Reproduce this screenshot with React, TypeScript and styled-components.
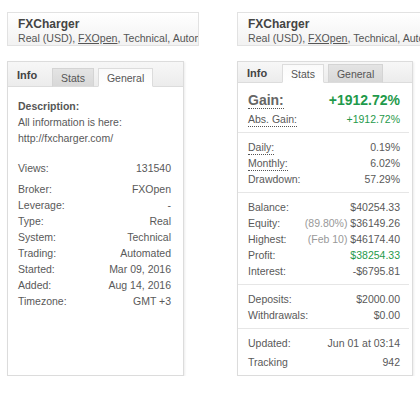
import { FC } from "react"
import styled, { createGlobalStyle } from "styled-components"

const GlobalStyle = createGlobalStyle`
  html, body {
    margin: 0;
    padding: 0;
    background: #fff;
    overflow: hidden;
  }
  body {
    font-family: "Liberation Sans", Arial, sans-serif;
    font-size: 10.5px;
    color: #595959;
  }
`

type Row = {
  label: string
  value: string
  note?: string
  green?: boolean
  dotted?: boolean
}

const generalRows: Row[] = [
  { label: "Broker:", value: "FXOpen" },
  { label: "Leverage:", value: "-" },
  { label: "Type:", value: "Real" },
  { label: "System:", value: "Technical" },
  { label: "Trading:", value: "Automated" },
  { label: "Started:", value: "Mar 09, 2016" },
  { label: "Added:", value: "Aug 14, 2016" },
  { label: "Timezone:", value: "GMT +3" },
]

const statGroups: Row[][] = [
  [
    { label: "Daily:", value: "0.19%", dotted: true },
    { label: "Monthly:", value: "6.02%", dotted: true },
    { label: "Drawdown:", value: "57.29%" },
  ],
  [
    { label: "Balance:", value: "$40254.33" },
    { label: "Equity:", value: "$36149.26", note: "(89.80%)" },
    { label: "Highest:", value: "$46174.40", note: "(Feb 10)" },
    { label: "Profit:", value: "$38254.33", green: true },
    { label: "Interest:", value: "-$6795.81" },
  ],
  [
    { label: "Deposits:", value: "$2000.00" },
    { label: "Withdrawals:", value: "$0.00" },
  ],
]

const SystemHeader: FC = () => (
  <HeaderBox>
    <Title>FXCharger</Title>
    <Subtitle>
      Real (USD), <BrokerLink>FXOpen</BrokerLink>, Technical, Automated
    </Subtitle>
  </HeaderBox>
)

const Tabs: FC<{ active: "stats" | "general" }> = ({ active }) => (
  <TabBar>
    <TabTitle>Info</TabTitle>
    <Tab $active={active === "stats"}>Stats</Tab>
    <Tab $active={active === "general"}>General</Tab>
  </TabBar>
)

const InfoRow: FC<{ row: Row }> = ({ row }) => (
  <RowLine>
    <Label $dotted={row.dotted}>{row.label}</Label>
    <Value $green={row.green}>
      {row.note && <Note>{row.note} </Note>}
      {row.value}
    </Value>
  </RowLine>
)

const App: FC = () => {
  return (
    <>
      <GlobalStyle />
      <Page>
        <Column>
          <SystemHeader />
          <Panel>
            <Tabs active="general" />
            <PanelBody>
              <Description>
                <strong>Description:</strong>
                <div>All information is here:</div>
                <div>http://fxcharger.com/</div>
              </Description>
              <Group>
                <InfoRow row={{ label: "Views:", value: "131540" }} />
              </Group>
              <Group>
                {generalRows.map((r) => (
                  <InfoRow key={r.label} row={r} />
                ))}
              </Group>
            </PanelBody>
          </Panel>
        </Column>

        <Column $right>
          <SystemHeader />
          <Panel $right>
            <Tabs active="stats" />
            <StatsBody>
              <Section $first>
                <GainRow>
                  <GainLabel>Gain:</GainLabel>
                  <GainValue>+1912.72%</GainValue>
                </GainRow>
                <InfoRow
                  row={{
                    label: "Abs. Gain:",
                    value: "+1912.72%",
                    green: true,
                    dotted: true,
                  }}
                />
              </Section>
              {statGroups.map((g, i) => (
                <Section key={i}>
                  {g.map((r) => (
                    <InfoRow key={r.label} row={r} />
                  ))}
                </Section>
              ))}
              <Section>
                <InfoRow row={{ label: "Updated:", value: "Jun 01 at 03:14" }} />
                <TrackRow>
                  <Label>Tracking</Label>
                  <Value>942</Value>
                </TrackRow>
              </Section>
            </StatsBody>
          </Panel>
        </Column>
      </Page>
    </>
  )
}

const Page = styled.div`
  display: flex;
  flex-direction: row;
  align-items: flex-start;
  padding: 12px 0 0 7px;
  width: 460px;
`

const Column = styled.div<{ $right?: boolean }>`
  display: flex;
  flex-direction: column;
  width: 192px;
  margin-left: ${(p) => (p.$right ? "38px" : "0")};
  flex-shrink: 0;
`

const HeaderBox = styled.div`
  height: 34px;
  padding: 4px 0 0 10px;
  box-sizing: border-box;
  border: 1px solid #e2e2e2;
  background: linear-gradient(#ffffff, #f2f2f2);
  overflow: hidden;
  white-space: nowrap;
`

const Title = styled.div`
  font-weight: bold;
  font-size: 12px;
  color: #444;
  line-height: 14px;
`

const Subtitle = styled.div`
  font-size: 10.6px;
  color: #555;
  line-height: 14px;
`

const BrokerLink = styled.span`
  text-decoration: underline;
`

const Panel = styled.div<{ $right?: boolean }>`
  margin-top: 15px;
  width: ${(p) => (p.$right ? "176px" : "177px")};
  height: 315px;
  box-sizing: border-box;
  border: 1px solid #dcdcdc;
  box-shadow: 1px 1px 2px rgba(0, 0, 0, 0.08);
  background: #fff;
  display: flex;
  flex-direction: column;
`

const TabBar = styled.div`
  height: 25px;
  box-sizing: border-box;
  display: flex;
  align-items: flex-end;
  padding-left: 9px;
  background: linear-gradient(#f7f7f7, #ececec);
  border-bottom: 1px solid #dcdcdc;
`

const TabTitle = styled.div`
  font-weight: bold;
  color: #444;
  font-size: 11px;
  align-self: center;
  width: 35px;
  margin-top: 2px;
`

const Tab = styled.div<{ $active?: boolean }>`
  height: 19px;
  line-height: 19px;
  padding: 0 8px;
  margin-right: 4px;
  margin-bottom: -1px;
  box-sizing: border-box;
  border: 1px solid ${(p) => (p.$active ? "#dcdcdc" : "#d4d4d4")};
  border-bottom: ${(p) => (p.$active ? "1px solid #fff" : "1px solid #dcdcdc")};
  background: ${(p) =>
    p.$active ? "linear-gradient(#fafafa, #fff)" : "linear-gradient(#e4e4e4, #d8d8d8)"};
  color: #555;
  font-size: 10.5px;
`

const PanelBody = styled.div`
  padding: 11px 12px 0 10px;
`

const Description = styled.div`
  line-height: 16px;
  margin-bottom: 14px;

  strong {
    color: #555;
  }
`

const Group = styled.div`
  margin-bottom: 5px;
`

const RowLine = styled.div`
  display: flex;
  justify-content: space-between;
  align-items: baseline;
  height: 16px;
  line-height: 16px;
`

const Label = styled.span<{ $dotted?: boolean }>`
  border-bottom: ${(p) => (p.$dotted ? "1px dotted #555" : "none")};
  line-height: 13px;
`

const Value = styled.span<{ $green?: boolean }>`
  color: ${(p) => (p.$green ? "#1f9a4b" : "#595959")};
`

const Note = styled.span`
  color: #999;
`

const StatsBody = styled.div`
  padding: 0 3px 0 0;
  display: flex;
  flex-direction: column;
`

const Section = styled.div<{ $first?: boolean }>`
  padding: ${(p) => (p.$first ? "9px" : "6px")} 9px 5px 10px;
  border-bottom: 1px solid #e6e6e6;

  &:last-child {
    border-bottom: none;
  }
`

const GainRow = styled.div`
  display: flex;
  justify-content: space-between;
  align-items: baseline;
  height: 19px;
`

const GainLabel = styled.span`
  font-size: 14px;
  font-weight: bold;
  color: #666;
  border-bottom: 1px dotted #555;
  line-height: 15px;
`

const GainValue = styled.span`
  font-size: 14px;
  font-weight: bold;
  color: #1f9a4b;
`

const TrackRow = styled(RowLine)`
  margin-top: 3px;
`

export default App
